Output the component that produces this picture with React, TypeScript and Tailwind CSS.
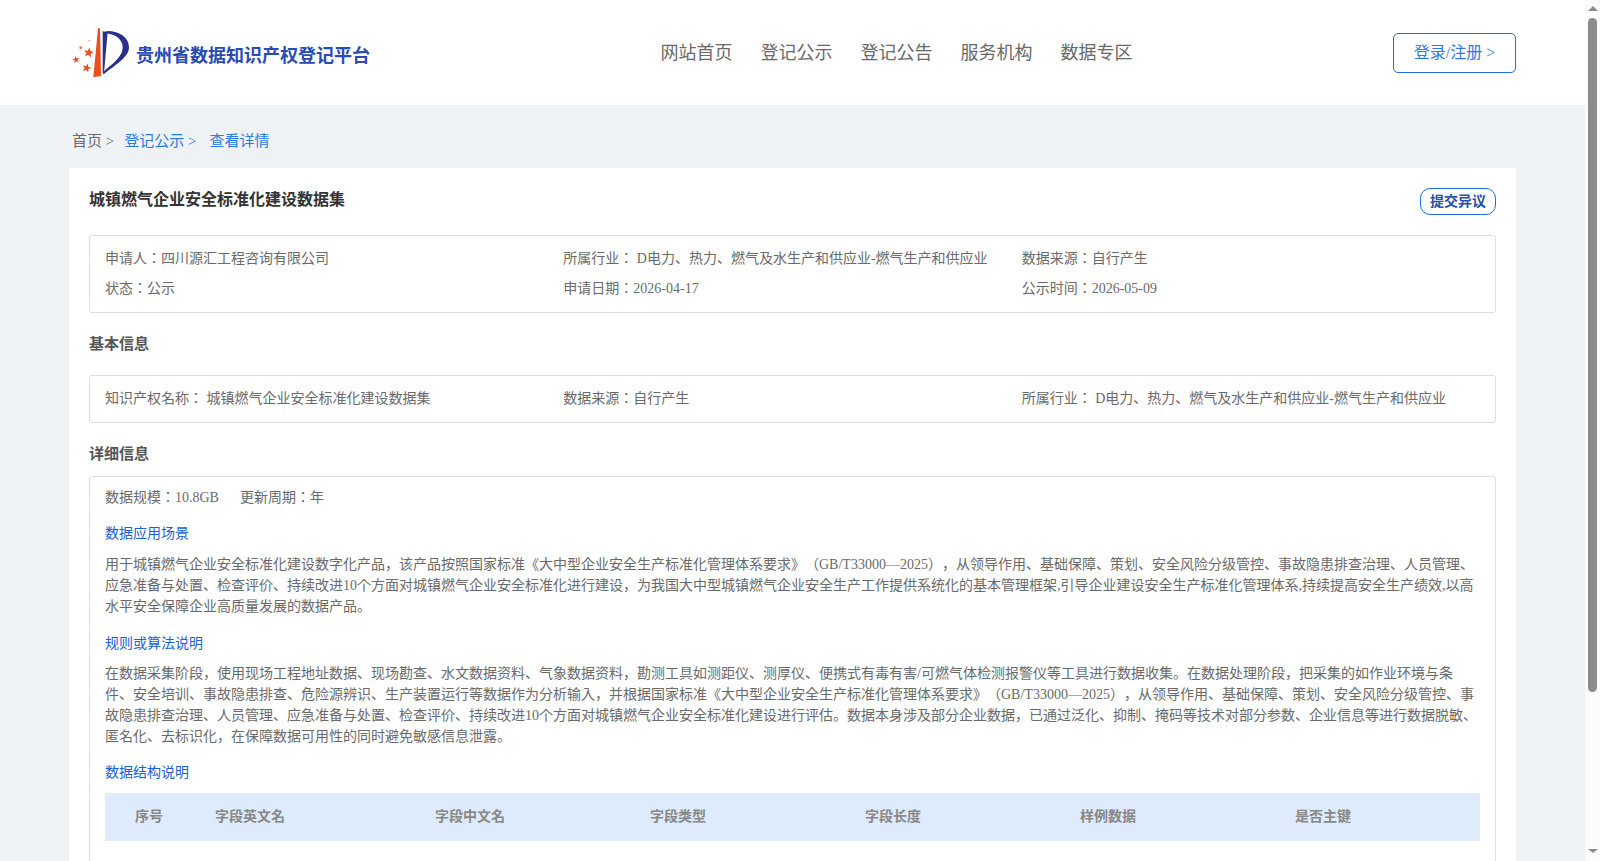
const navItems = ["网站首页", "登记公示", "登记公告", "服务机构", "数据专区"];
const columns = ["字段中文名", "字段类型", "字段长度", "样例数据", "是否主键"];

function star(cx: number, cy: number, r: number, rot = 0) {
  const pts: string[] = [];
  for (let i = 0; i < 10; i++) {
    const radius = i % 2 === 0 ? r : r * 0.42;
    const a = ((-90 + rot + i * 36) * Math.PI) / 180;
    pts.push(`${(cx + radius * Math.cos(a)).toFixed(1)},${(cy + radius * Math.sin(a)).toFixed(1)}`);
  }
  return pts.join(" ");
}

function Logo() {
  return (
    <svg width="70" height="65" viewBox="0 0 210 195" className="shrink-0">
      <path d="M99 25 L105 25 L108 168 L85 172 Z" fill="#e8501c" />
      <path d="M113 34 L128 36 L117 158 L113 160 Z" fill="#2a2f8f" />
      <path
        d="M124 33 C168 33 192 55 192 82 C192 112 150 135 115 164 L115 155 C145 130 173 110 173 82 C173 60 155 44 124 40 Z"
        fill="#2a2f8f"
      />
      <polygon points={star(71, 98, 16, 10)} fill="#e8501c" />
      <polygon points={star(33, 119, 11, -10)} fill="#e8501c" />
      <polygon points={star(65, 144, 14, 15)} fill="#e8501c" />
      <circle cx="47" cy="83" r="4" fill="#ec7a55" />
      <circle cx="73" cy="62" r="2.5" fill="#efa184" />
    </svg>
  );
}

function Field({ children }: { children: React.ReactNode }) {
  return <div className="whitespace-nowrap">{children}</div>;
}

function Scrollbar() {
  return (
    <div className="flex w-[15px] shrink-0 flex-col items-center bg-[#fbfbfb]">
      <div className="mt-[6px] h-0 w-0 border-x-[5px] border-b-[5px] border-x-transparent border-b-[#8c8c8c]" />
      <div className="mt-[7px] h-[674px] w-[9px] rounded-[5px] bg-[#8c8c8c]" />
      <div className="mt-auto mb-[8px] h-0 w-0 border-x-[5px] border-t-[4px] border-x-transparent border-t-[#8c8c8c]" />
    </div>
  );
}

export default function App() {
  return (
    <div className="flex h-[861px] overflow-hidden font-['Liberation_Serif','Noto_Sans_CJK_JP',serif] text-sm text-[#6a6a6a] [text-spacing-trim:space-all]">
      <div className="min-w-0 flex-1 overflow-hidden bg-[#eff2f5]">
        {/* Header */}
        <header className="flex h-[105px] items-center bg-white pl-[65px] pr-[69px]">
          <div className="flex w-[595.5px] items-center gap-[1px]">
            <Logo />
            <span className="pt-[7px] text-lg font-bold text-[#2a4bb3]">贵州省数据知识产权登记平台</span>
          </div>
          <nav className="flex flex-1 gap-7 text-lg text-[#6a6a6a]">
            {navItems.map((item) => (
              <span key={item}>{item}</span>
            ))}
          </nav>
          <button className="h-10 w-[123px] rounded-[5px] border border-[#1a6fe8] text-base text-[#2a7ae8]">
            登录/注册 &gt;
          </button>
        </header>

        <main className="px-[69px]">
          {/* Breadcrumb */}
          <div className="flex h-[63px] items-center pl-[3px] pt-[11px] text-[15px]">
            <span className="mr-[10px]">首页 &gt;</span>
            <span className="mr-[13px] text-[#2a7ae8]">登记公示 &gt;</span>
            <span className="text-[#2a7ae8]">查看详情</span>
          </div>

          {/* Card */}
          <div className="bg-white px-5 pb-5 pt-5">
            <div className="flex items-start justify-between">
              <h1 className="text-base font-bold leading-6 text-[#333]">城镇燃气企业安全标准化建设数据集</h1>
              <button className="h-[27px] w-[76px] rounded-[10px] border border-[#1a6fe8] text-sm font-bold text-[#2351b0]">
                提交异议
              </button>
            </div>

            <div className="mt-5 grid grid-cols-3 gap-y-[9px] rounded-[3px] border border-[#ddd] px-[15px] pb-[13px] pt-3 leading-[21px]">
              <Field>申请人：四川源汇工程咨询有限公司</Field>
              <Field>所属行业： D电力、热力、燃气及水生产和供应业-燃气生产和供应业</Field>
              <Field>数据来源：自行产生</Field>
              <Field>状态：公示</Field>
              <Field>申请日期：2026-04-17</Field>
              <Field>公示时间：2026-05-09</Field>
            </div>

            <h2 className="mb-[19px] mt-[19px] text-[15px] font-bold leading-[24px] text-[#555]">基本信息</h2>
            <div className="grid grid-cols-3 rounded-[3px] border border-[#ddd] px-[15px] pb-[13px] pt-3 leading-[21px]">
              <Field>知识产权名称： 城镇燃气企业安全标准化建设数据集</Field>
              <Field>数据来源：自行产生</Field>
              <Field>所属行业： D电力、热力、燃气及水生产和供应业-燃气生产和供应业</Field>
            </div>

            <h2 className="mb-[10px] mt-[19px] text-[15px] font-bold leading-[24px] text-[#555]">详细信息</h2>
            <div className="rounded-[3px] border border-[#ddd] px-[15px] pb-[160px] pt-[10px] leading-[21px]">
              <div className="flex gap-[21px]">
                <span>数据规模：10.8GB</span>
                <span>更新周期：年</span>
              </div>

              <h3 className="mt-[15px] text-[#1a5fd8]">数据应用场景</h3>
              <p className="mt-[10px]">
                用于城镇燃气企业安全标准化建设数字化产品，该产品按照国家标准《大中型企业安全生产标准化管理体系要求》（GB/T33000—2025），从领导作用、基础保障、策划、安全风险分级管控、事故隐患排查治理、人员管理、应急准备与处置、检查评价、持续改进10个方面对城镇燃气企业安全标准化进行建设，为我国大中型城镇燃气企业安全生产工作提供系统化的基本管理框架,引导企业建设安全生产标准化管理体系,持续提高安全生产绩效,以高水平安全保障企业高质量发展的数据产品。
              </p>

              <h3 className="mt-[16px] text-[#1a5fd8]">规则或算法说明</h3>
              <p className="mt-[9px]">
                在数据采集阶段，使用现场工程地址数据、现场勘查、水文数据资料、气象数据资料，勘测工具如测距仪、测厚仪、便携式有毒有害/可燃气体检测报警仪等工具进行数据收集。在数据处理阶段，把采集的如作业环境与条件、安全培训、事故隐患排查、危险源辨识、生产装置运行等数据作为分析输入，并根据国家标准《大中型企业安全生产标准化管理体系要求》（GB/T33000—2025），从领导作用、基础保障、策划、安全风险分级管控、事故隐患排查治理、人员管理、应急准备与处置、检查评价、持续改进10个方面对城镇燃气企业安全标准化建设进行评估。数据本身涉及部分企业数据，已通过泛化、抑制、掩码等技术对部分参数、企业信息等进行数据脱敏、匿名化、去标识化，在保障数据可用性的同时避免敏感信息泄露。
              </p>

              <h3 className="mt-[15px] text-[#1a5fd8]">数据结构说明</h3>
              <div className="mt-[10px] flex h-12 items-center overflow-hidden bg-[#deebfc] text-sm font-bold text-[#888]">
                <span className="mr-[22px] w-[88px] shrink-0 text-center">序号</span>
                <span className="w-[220px] shrink-0">字段英文名</span>
                {columns.map((col) => (
                  <span key={col} className="w-[215px] shrink-0">{col}</span>
                ))}
              </div>
            </div>
          </div>
        </main>
      </div>
      <Scrollbar />
    </div>
  );
}
